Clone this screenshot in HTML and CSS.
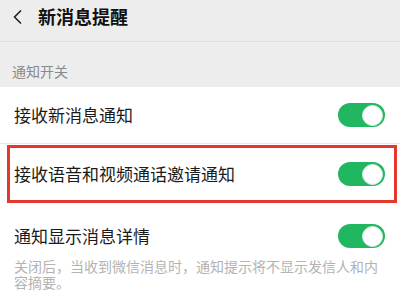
FILE: index.html
```html
<!DOCTYPE html>
<html lang="zh-CN">
<head>
<meta charset="utf-8">
<link rel="stylesheet" href="styles.css">
</head>
<body>
<header class="header">
  <svg class="back" width="12" height="16" viewBox="0 0 12 16"><path d="M9 1.5 L2.5 8 L9 14.5" fill="none" stroke="#222" stroke-width="1.6"/></svg>
  <h1 class="title">新消息提醒</h1>
</header>
<div class="section-label">通知开关</div>
<div class="list">
  <div class="row row-first">
    <span class="row-text">接收新消息通知</span>
    <span class="toggle"><span class="knob"></span></span>
  </div>
  <div class="highlight">
    <div class="row row-inner">
      <span class="row-text">接收语音和视频通话邀请通知</span>
      <span class="toggle"><span class="knob"></span></span>
    </div>
  </div>
  <div class="row-block">
    <div class="row row-last">
      <span class="row-text">通知显示消息详情</span>
      <span class="toggle"><span class="knob"></span></span>
    </div>
    <p class="desc">关闭后，当收到微信消息时，通知提示将不显示发信人和内容摘要。</p>
  </div>
</div>
</body>
</html>
```
FILE: styles.css
```css
html, body {
  margin: 0;
  padding: 0;
}
body {
  width: 400px;
  height: 300px;
  overflow: hidden;
  background: #ededed;
  font-family: "Noto Sans CJK SC", "Noto Sans", sans-serif;
  color: #1a1a1a;
}
.header {
  height: 42px;
  box-sizing: border-box;
  border-bottom: 1px solid #dedede;
  display: flex;
  align-items: flex-start;
  padding: 6px 0 0 12px;
}
.back {
  margin-top: 3px;
}
.title {
  margin: 0 0 0 14px;
  font-size: 18px;
  line-height: 21px;
  font-weight: bold;
  color: #111;
}
.section-label {
  height: 45px;
  box-sizing: border-box;
  padding: 20px 0 0 12px;
  font-size: 14px;
  line-height: 18px;
  color: #8a8a8a;
}
.list {
  background: #fff;
  height: 220px;
}
.row {
  display: flex;
  align-items: center;
  justify-content: space-between;
}
.row-text {
  font-size: 17px;
  line-height: 22px;
  color: #1a1a1a;
}
.row-first {
  height: 57px;
  box-sizing: border-box;
  padding: 0 15px 0 14px;
  border-bottom: 1px solid #e8e8e8;
}
.highlight {
  margin: 1px 3px 0 7px;
  border: 3px solid #e6372f;
  height: 58px;
  box-sizing: border-box;
}
.row-inner {
  height: 100%;
  padding: 0 9px 0 4px;
}
.row-block {
  padding: 0 15px 0 14px;
}
.row-last {
  padding-top: 21px;
}
.toggle {
  width: 47px;
  height: 24px;
  border-radius: 12px;
  background: #20b760;
  display: flex;
  align-items: center;
  justify-content: flex-end;
  padding-right: 2px;
  box-sizing: border-box;
}
.knob {
  width: 21px;
  height: 21px;
  border-radius: 50%;
  background: #fff;
  box-sizing: border-box;
  border: 1px solid #d9efe2;
}
.desc {
  margin: 10px 0 0;
  width: 372px;
  font-size: 14px;
  line-height: 16px;
  color: #b3b3b3;
}
```
